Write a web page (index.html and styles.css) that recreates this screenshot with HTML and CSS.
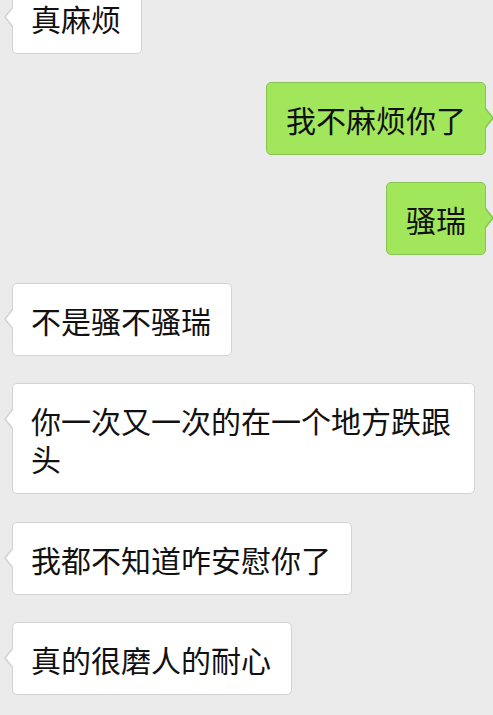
FILE: index.html
```html
<!DOCTYPE html>
<html lang="zh-CN">
<head>
  <meta charset="UTF-8" />
  <meta name="viewport" content="width=device-width, initial-scale=1" />
  <title>聊天</title>
  <link rel="stylesheet" href="styles.css">
</head>
<body>
  <main class="chat">
    <div class="msg msg-in">真麻烦</div>
    <div class="msg msg-out">我不麻烦你了</div>
    <div class="msg msg-out">骚瑞</div>
    <div class="msg msg-in">不是骚不骚瑞</div>
    <div class="msg msg-in">你一次又一次的在一个地方跌跟头</div>
    <div class="msg msg-in">我都不知道咋安慰你了</div>
    <div class="msg msg-in">真的很磨人的耐心</div>
  </main>
</body>
</html>
```

FILE: styles.css
```css
body {
  margin: 0;
  background: #ebebeb;
  font-family: "Noto Sans CJK SC", "Noto Sans", sans-serif;
  color: #111;
  overflow: hidden;
}
.chat {
  display: flex;
  flex-direction: column;
  gap: 27.5px;
  margin-top: -19px;
}
.msg {
  position: relative;
  box-sizing: border-box;
  max-width: 463px;
  padding: 17px 20px 16px 18px;
  font-size: 30px;
  line-height: 38px;
  border-radius: 5px;
  border: 1px solid #d3d3d3;
  background: #fff;
}
.msg::before,
.msg::after {
  content: "";
  position: absolute;
  top: 25px;
  width: 0;
  height: 0;
  border-top: 10px solid transparent;
  border-bottom: 10px solid transparent;
}
.msg-in {
  align-self: flex-start;
  margin-left: 12px;
}
.msg-in::before {
  left: -9px;
  border-right: 8px solid #d3d3d3;
}
.msg-in::after {
  left: -7px;
  border-right: 8px solid #fff;
}
.msg-out {
  align-self: flex-end;
  margin-right: 7px;
  padding: 17px 19px 16px;
  background: #a2e65b;
  border-color: #88c554;
}
.msg-out::before {
  right: -9px;
  border-left: 8px solid #88c554;
}
.msg-out::after {
  right: -7px;
  border-left: 8px solid #a2e65b;
}
```
